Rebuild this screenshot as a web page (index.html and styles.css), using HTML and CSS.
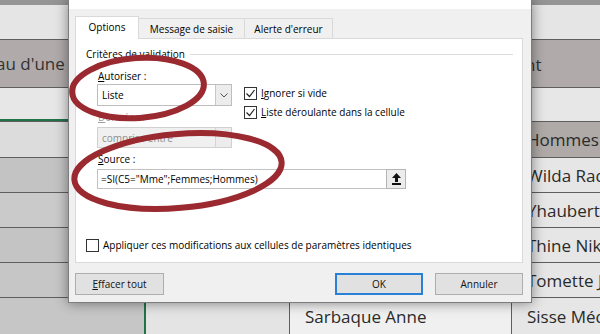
FILE: index.html
```html
<!DOCTYPE html>
<html>
  <head>
    <title>Validation des données</title>
    <meta charset="UTF-8">
    <meta name="viewport" content="width=device-width, initial-scale=1.0">

  <!--CSS-->
    <link rel="stylesheet" href="styles.css">
  </head>

<body>

  <!--The sheet behind the dialog-->
  <div class="sheet">
    <div class="row r0">
      <div class="cell ca"></div><div class="cell cb"></div><div class="cell cc"></div><div class="cell cd"></div>
    </div>
    <div class="row r1">
      <div class="cell ca"></div><div class="cell cb"></div><div class="cell cc"></div><div class="cell cd"></div>
    </div>
    <div class="row r2 title">
      <div class="cell ca">au d'une</div><div class="cell cb"></div><div class="cell cc"></div><div class="cell cd">nt</div>
    </div>
    <div class="row r3">
      <div class="cell ca sel-top"></div><div class="cell cb"></div><div class="cell cc"></div><div class="cell cd"></div>
    </div>
    <div class="row r4">
      <div class="cell ca sel"></div><div class="cell cb"></div><div class="cell cc"></div><div class="cell cd head">Hommes</div>
    </div>
    <div class="row r5">
      <div class="cell ca sel"></div><div class="cell cb"></div><div class="cell cc"></div><div class="cell cd">Wilda Radis</div>
    </div>
    <div class="row r6">
      <div class="cell ca sel"></div><div class="cell cb"></div><div class="cell cc"></div><div class="cell cd">Yhaubert Gilles</div>
    </div>
    <div class="row r7">
      <div class="cell ca sel"></div><div class="cell cb"></div><div class="cell cc"></div><div class="cell cd">Thine Nikita</div>
    </div>
    <div class="row r8">
      <div class="cell ca sel"></div><div class="cell cb"></div><div class="cell cc"></div><div class="cell cd">Tomette Jules</div>
    </div>
    <div class="row r9">
      <div class="cell ca sel"></div><div class="cell cb"></div><div class="cell cc">Sarbaque Anne</div><div class="cell cd">Sisse Médina</div>
    </div>
  </div>


  <!--The dialog-->
  <div class="dialog">
    <div class="titlebar"></div>
    <div class="dlg-body">

      <!--Tabs-->
      <div class="tabs">
        <div class="tab active">Options</div>
        <div class="tab w-msg">Message de saisie</div>
        <div class="tab w-alert">Alerte d'erreur</div>
      </div>

      <div class="panel">
        <div class="group"><span>Critères de validation</span><span class="group-line"></span></div>

        <div class="criteria">
          <div class="col-left">
            <div class="label"><u>A</u>utoriser :</div>
            <div class="combo">
              <span class="combo-text">Liste</span>
              <span class="arrow"><svg width="8" height="5" viewBox="0 0 8 5"><polyline points="0.5,0.5 4,4 7.5,0.5" fill="none" stroke="#555" stroke-width="1"/></svg></span>
            </div>
            <div class="label disabled"><u>D</u>onnées :</div>
            <div class="combo disabled">
              <span class="combo-text">comprise entre</span>
              <span class="arrow"></span>
            </div>
          </div>

          <div class="col-right">
            <div class="check">
              <span class="box"><svg width="11" height="11" viewBox="0 0 11 11"><polyline points="1.5,5.5 4.5,8.5 9.5,2" fill="none" stroke="#222" stroke-width="1.2"/></svg></span>
              <span><u>I</u>gnorer si vide</span>
            </div>
            <div class="check second">
              <span class="box"><svg width="11" height="11" viewBox="0 0 11 11"><polyline points="1.5,5.5 4.5,8.5 9.5,2" fill="none" stroke="#222" stroke-width="1.2"/></svg></span>
              <span><u>L</u>iste déroulante dans la cellule</span>
            </div>
          </div>
        </div>

        <div class="label source-label"><u>S</u>ource :</div>
        <div class="source">
          <div class="source-input">=SI(C5="Mme";Femmes;Hommes)</div>
          <div class="pick">
            <svg width="9" height="12" viewBox="0 0 9 12"><path d="M4.5 0 L9 5 H6 V9 H3 V5 H0 Z" fill="#111"/><rect x="0" y="10" width="9" height="2" fill="#111"/></svg>
          </div>
        </div>

        <div class="check apply">
          <span class="box"></span>
          <span>Appliquer ces modifications aux cellules de paramètres identiques</span>
        </div>
      </div>

      <!--Buttons-->
      <div class="buttons">
        <button class="btn-clear"><u>E</u>ffacer tout</button>
        <span class="spacer"></span>
        <button class="default">OK</button>
        <button>Annuler</button>
      </div>
    </div>
  </div>


  <!--Red marks drawn over the dialog-->
  <svg class="marks" width="600" height="334" viewBox="0 0 600 334">
    <ellipse cx="138" cy="88" rx="66" ry="30" transform="rotate(-4 138 88)"/>
    <ellipse cx="178" cy="171" rx="104" ry="37" transform="rotate(-5 178 171)"/>
  </svg>

</body>
</html>
```

FILE: styles.css
```css
html, body {
  margin: 0;
  padding: 0;
  width: 600px;
  height: 334px;
  overflow: hidden;
  background-color: #e6e6e6;
}

/**The sheet*/
.sheet {
  font-family: "Open Sans", sans-serif;
  font-size: 17px;
  color: #2a2a2a;
}

.row {
  display: flex;
  border-bottom: 1px solid #5e5e5e;
  box-sizing: border-box;
}

.cell {
  flex: none;
  display: flex;
  align-items: center;
  padding-left: 15px;
  box-sizing: border-box;
  border-right: 1px solid #5e5e5e;
  white-space: nowrap;
  overflow: hidden;
  background-color: #e6e6e6;
}

.ca { width: 146px; background-color: #c6c6c6; }
.cb { width: 144px; background-color: #e4e4e4; }
.cc { width: 222px; background-color: #f0f0f0; }
.cd { flex: 1; border-right: none; background-color: #e6e6e6; }

.r0 { height: 5px; border-bottom: none; }
.r0 .cell { background-color: #959595; border-right: none; }
.r1 { height: 35px; }
.r1 .cell { background-color: #e5e5e5; }
.r2 { height: 48px; }
.r3 { height: 34px; }
.r3 .cell { background-color: #e7e7e7; }
.r4 { height: 36px; }
.r5 { height: 35px; }
.r6 { height: 35px; }
.r7 { height: 35px; }
.r8 { height: 35px; }
.r9 { height: 36px; border-bottom: none; }

.title .cell {
  background-color: #b0abaa;
  border-right: none;
  font-size: 17px;
  color: #333;
}

.title .ca {
  padding-left: 0;
  text-indent: -4px;
}

.title .cd {
  padding-left: 13px;
  padding-top: 2px;
}

.r4 .ca { background-color: #dcdcdc; }
.r5 .ca { background-color: #c3c3c3; }
.r6 .ca { background-color: #cacaca; }
.r7 .ca { background-color: #c4c4c4; }
.r8 .ca { background-color: #c6c6c6; }

.cd.head { background-color: #afaaa8; }

/**Selection in green*/
.sel {
  border-right: 2px solid #217346;
}

.r3 .sel-top {
  box-shadow: inset 0 -2px 0 #217346;
}


/**The dialog*/
.dialog {
  position: absolute;
  left: 68px;
  top: 0;
  width: 464px;
  box-sizing: border-box;
  border: 1px solid #7d7d7d;
  border-top: none;
  background-color: #f0f0f0;
  box-shadow: 0px 0px 12px rgba(0, 0, 0, 0.45);
  font-family: "Open Sans", sans-serif;
  font-size: 10px;
  color: #000;
}

.titlebar {
  height: 9px;
  background-color: #fff;
}

.dlg-body {
  padding: 7px 8px 7px 6px;
}

.tabs {
  display: flex;
  align-items: flex-end;
  height: 22px;
  position: relative;
  z-index: 1;
}

.tab {
  height: 20px;
  box-sizing: border-box;
  border: 1px solid #d9d9d9;
  border-bottom: none;
  background-color: #f0f0f0;
  margin-left: -1px;
  display: flex;
  align-items: center;
  justify-content: center;
  padding-top: 1px;
}

.tab.active {
  width: 64px;
  height: 23px;
  margin-left: 0;
  margin-bottom: -1px;
  background-color: #fff;
  padding-bottom: 3px;
}

.w-msg { width: 107px; }
.w-alert { width: 89px; }

.panel {
  height: 225px;
  box-sizing: border-box;
  border: 1px solid #d9d9d9;
  background-color: #fff;
  padding-left: 10px;
}

.group {
  display: flex;
  align-items: center;
  margin-top: 8px;
  line-height: 14px;
}

.group-line {
  flex: 1;
  height: 1px;
  background-color: #dcdcdc;
  margin-left: 5px;
  margin-right: 9px;
}

.criteria {
  display: flex;
  padding-left: 11px;
  margin-top: 8px;
}

.col-left {
  width: 135px;
}

.label {
  line-height: 14px;
  padding-left: 1px;
}

.label.disabled {
  margin-top: 4px;
  color: #a0a0a0;
}

.combo {
  display: flex;
  height: 22px;
  margin-top: 1px;
  box-sizing: border-box;
  border: 1px solid #bdbdbd;
  background-color: #fff;
}

.combo-text {
  flex: 1;
  display: flex;
  align-items: center;
  padding-left: 4px;
}

.arrow {
  width: 15px;
  display: flex;
  align-items: center;
  justify-content: center;
  border-left: 1px solid #c8c8c8;
  background-color: #ececec;
}

.combo.disabled {
  height: 21px;
  margin-top: 3px;
  border-color: #d0d0d0;
  background-color: #f0f0f0;
  color: #8d8d8d;
}

.combo.disabled .arrow {
  border-left-color: #d4d4d4;
}

.col-right {
  margin-left: 12px;
  padding-top: 17px;
}

.check {
  display: flex;
  align-items: center;
  line-height: 14px;
  white-space: nowrap;
}

.check.second {
  margin-top: 5px;
}

.box {
  width: 13px;
  height: 13px;
  box-sizing: border-box;
  border: 1px solid #333;
  background-color: #fff;
  margin-right: 4px;
  display: flex;
  align-items: center;
  justify-content: center;
}

.source-label {
  margin-top: 4px;
  padding-left: 12px;
}

.source {
  display: flex;
  height: 20px;
  margin-top: 3px;
  margin-left: 11px;
}

.source-input {
  width: 289px;
  box-sizing: border-box;
  border: 1px solid #c2c2c2;
  border-right: none;
  display: flex;
  align-items: center;
  padding-left: 3px;
}

.pick {
  width: 20px;
  box-sizing: border-box;
  border: 1px solid #b5b5b5;
  background-color: #ececec;
  display: flex;
  align-items: center;
  justify-content: center;
}

.check.apply {
  margin-top: 49px;
}

/**Buttons*/
.buttons {
  display: flex;
  margin-top: 10px;
}

.spacer {
  flex: 1;
}

button {
  width: 88px;
  height: 22px;
  padding: 0;
  box-sizing: border-box;
  border: 1px solid #adadad;
  background-color: #e1e1e1;
  font-family: "Open Sans", sans-serif;
  font-size: 10px;
  color: #111;
  margin-left: 12px;
}

.btn-clear {
  width: 89px;
  margin-left: 0;
}

button.default {
  border: 2px solid #2a7fd6;
}

/**Red circles*/
.marks {
  position: absolute;
  left: 0;
  top: 0;
  pointer-events: none;
}

.marks ellipse {
  fill: none;
  stroke: #9a2a2f;
  stroke-width: 6;
}
```
